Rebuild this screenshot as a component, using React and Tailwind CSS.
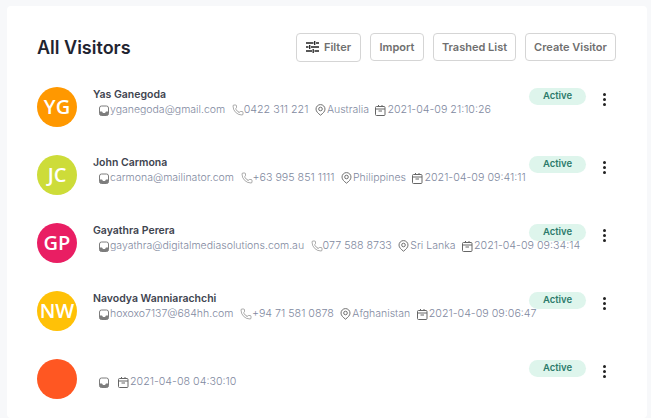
import { Phone } from "lucide-react";

const visitors = [
  { initials: "YG", color: "bg-[#ff9800]", name: "Yas Ganegoda", email: "yganegoda@gmail.com", phone: "0422 311 221", country: "Australia", date: "2021-04-09 21:10:26" },
  { initials: "JC", color: "bg-[#cddc39]", name: "John Carmona", email: "carmona@mailinator.com", phone: "+63 995 851 1111", country: "Philippines", date: "2021-04-09 09:41:11" },
  { initials: "GP", color: "bg-[#e91e63]", name: "Gayathra Perera", email: "gayathra@digitalmediasolutions.com.au", phone: "077 588 8733", country: "Sri Lanka", date: "2021-04-09 09:34:14" },
  { initials: "NW", color: "bg-[#ffc107]", name: "Navodya Wanniarachchi", email: "hoxoxo7137@684hh.com", phone: "+94 71 581 0878", country: "Afghanistan", date: "2021-04-09 09:06:47" },
  { initials: "", color: "bg-[#ff5722]", name: "", email: "", phone: "", country: "", date: "2021-04-08 04:30:10" },
];

const InboxIcon = () => (
  <svg width="10" height="11" viewBox="0 0 10 11" className="shrink-0">
    <rect x="0.5" y="1" width="9" height="9.5" rx="2" fill="none" stroke="#7d7d7d" />
    <path d="M0.5 6.5h2.5l1 1.5h2l1-1.5h2.5v2a2 2 0 0 1-2 2h-5a2 2 0 0 1-2-2z" fill="#7d7d7d" />
  </svg>
);

const PinIcon = () => (
  <svg width="11" height="12" viewBox="0 0 11 12" fill="none" stroke="#707070" className="shrink-0">
    <path d="M5.5 11.2C3.2 9.4 1 7.500 1 5.100a4.500 4.500 0 0 1 9 0c0 2.400-2.200 4.300-4.500 6.100z" />
    <circle cx="5.500" cy="5" r="1.800" />
  </svg>
);

const CalendarIcon = () => (
  <svg width="11" height="11" viewBox="0 0 11 11" fill="none" stroke="#666" className="shrink-0">
    <rect x="0.5" y="1.500" width="9.500" height="9" rx="1" />
    <path d="M0.500 4h9.500M3.500 0v2M7 0v2M3.500 6h3.500" />
  </svg>
);

const SlidersIcon = () => (
  <svg width="13" height="12" viewBox="0 0 13 12" stroke="#222" strokeWidth="1.300" className="shrink-0">
    <path d="M0 2h7.500M10 2h3M0 6h2.500M5 6h8M0 10h6M8.500 10h4.500M8.700 0v4M3.700 4v4M7.200 8v4" />
  </svg>
);

const Meta = ({ icon, text, className = "" }) => (
  <span className="flex items-center gap-[1px]">
    {icon}
    <span className={`min-w-[1.500px] ${className}`}>{text}</span>
  </span>
);

const Button = ({ children, className = "" }) => (
  <button className={`flex items-center justify-center rounded-[4px] border border-[#d5d5d5] bg-white text-[11px] font-semibold text-[#6f6f6f] ${className}`}>
    {children}
  </button>
);

const App = () => {
  return (
    <div className="h-[418px] overflow-hidden bg-[#f7f8fa] pt-[6px] pl-[7px] pr-[4px] font-['Inter',sans-serif]">
      <div className="h-full rounded-[4px] bg-white pl-[30px] pr-[31px]">
        {/* Header */}
        <div className="flex h-[81px] items-center justify-between pt-[1px]">
          <h1 className="text-[18px] font-semibold text-[#1f2430]">All Visitors</h1>
          <div className="flex items-center gap-[9px]">
            <Button className="h-[29px] w-[65px] gap-[5px]">
              <SlidersIcon />
              Filter
            </Button>
            <Button className="h-[28px] w-[54px]">Import</Button>
            <Button className="h-[28px] w-[83px]">Trashed List</Button>
            <Button className="h-[28px] w-[91px]">Create Visitor</Button>
          </div>
        </div>

        {/* Visitor rows */}
        {visitors.map((visitor) => (
          <div key={visitor.date} className="flex h-[68px] items-start">
            <div className="flex min-w-0 flex-1 items-start">
              <div className={`flex size-[40px] shrink-0 items-center justify-center rounded-full ${visitor.color} font-['Open_Sans',sans-serif] text-[20px] font-semibold text-white`}>
                {visitor.initials}
              </div>
              <div className="ml-[16px] pt-[1px]">
                <p className="h-[13px] text-[10.500px] leading-[13px] font-semibold text-[#40444f]">{visitor.name}</p>
                <div className="mt-[1px] ml-[6px] flex h-[16px] items-center gap-[6.500px] text-[10.700px] font-light whitespace-nowrap text-[#7f89a0]">
                  <Meta icon={<InboxIcon />} text={visitor.email} className="text-[10.500px]" />
                  {visitor.phone && <Meta icon={<Phone size={12} strokeWidth={1.100} color="#666" className="shrink-0" />} text={visitor.phone} className="-ml-[1px]" />}
                  {visitor.country && <Meta icon={<PinIcon />} text={visitor.country} className="text-[10.500px]" />}
                  <Meta icon={<CalendarIcon />} text={visitor.date} />
                </div>
              </div>
            </div>
            <div className="flex shrink-0 items-start gap-[17px] pt-[1px] pr-[10px]">
              <span className="flex h-[17px] w-[57px] items-center justify-center rounded-full bg-[#def5ec] text-[9.500px] font-semibold text-[#2c7a6b]">
                Active
              </span>
              <span className="mt-[5px] flex flex-col gap-[2px]">
                <span className="size-[3px] rounded-full bg-[#222]" />
                <span className="size-[3px] rounded-full bg-[#222]" />
                <span className="size-[3px] rounded-full bg-[#222]" />
              </span>
            </div>
          </div>
        ))}
      </div>
    </div>
  );
};

export default App;
